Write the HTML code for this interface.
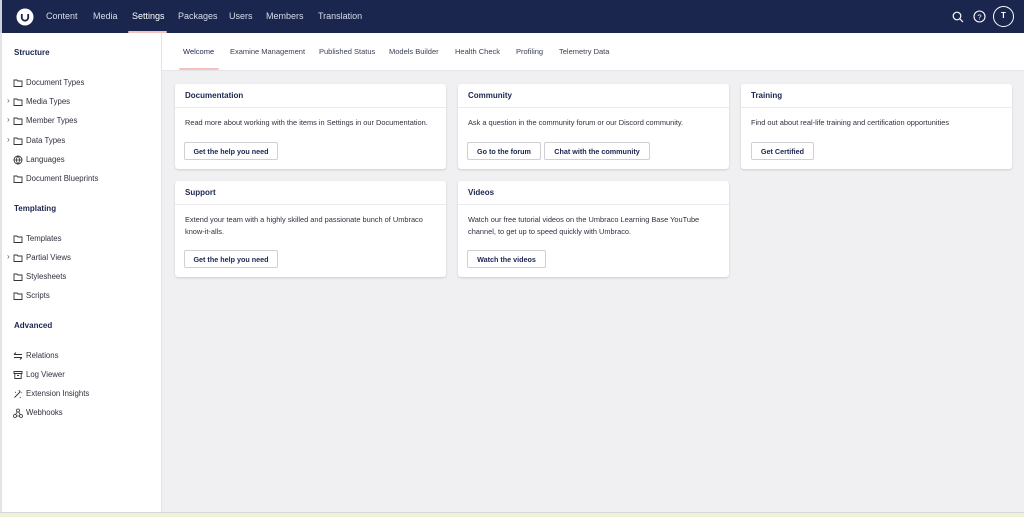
<!DOCTYPE html>
<html><head><meta charset="utf-8"><style>
*{margin:0;padding:0;box-sizing:border-box}
body{width:1024px;height:517px;overflow:hidden;background:#eef3d8;font-family:"Liberation Sans",sans-serif;color:#1b264f;position:relative}
.abs{position:absolute;white-space:nowrap}
#hdr{position:absolute;left:0;top:0;width:1024px;height:33px;background:#1b264f;border-left:2px solid #cfd2dc}
.nav{position:absolute;top:11px;font-size:9px;color:#d8dcea}
#side{position:absolute;left:0;top:33px;width:162px;height:480px;background:#fff;border-right:1px solid #e4e4e8;border-left:2px solid #e4e4e8}
#sin{position:absolute;left:-2px;top:-33px;width:160px;height:0}
#main{position:absolute;left:162px;top:33px;width:862px;height:480px;background:#f0f0f2}
#tabs{position:absolute;left:162px;top:33px;width:862px;height:38px;background:#fff;border-bottom:1px solid #e6e6ea}
.tab{position:absolute;top:14px;font-size:7.5px;color:#3a3f55}
.h{position:absolute;font-size:8px;font-weight:bold;color:#1b264f;left:14px}
.it{position:absolute;font-size:7.8px;color:#303040;left:26px}
.ic{position:absolute;left:13px;width:10px;height:10px}
.chev{position:absolute;left:7px;font-size:8px;color:#555}
.card{position:absolute;background:#fff;border-radius:3px;box-shadow:0 1px 2px rgba(0,0,0,.15)}
.ch{height:24px;border-bottom:1px solid #ebebef;font-size:8px;font-weight:bold;padding:7px 10px}
.cb{font-size:7.4px;color:#303040;padding:9px 10px 0;line-height:12px}
.btn{position:absolute;height:18px;border:1px solid #cfd0d6;border-radius:2px;font-size:7.2px;font-weight:bold;padding:4px 0;text-align:center;color:#1b264f;background:#fff}
</style></head><body>
<div id="hdr">
<svg class="abs" style="left:14px;top:8px" width="18" height="18" viewBox="0 0 18 18"><circle cx="9" cy="9" r="8.5" fill="#fff"/><path d="M5.8 6v3.5a3.2 3.2 0 0 0 6.4 0V6" stroke="#1b264f" stroke-width="1.8" fill="none"/></svg>
<span class="nav" style="left:44px">Content</span>
<span class="nav" style="left:91px">Media</span>
<span class="nav" style="left:130px;color:#fff">Settings</span>
<span class="nav" style="left:176px">Packages</span>
<span class="nav" style="left:227px">Users</span>
<span class="nav" style="left:264px">Members</span>
<span class="nav" style="left:316px">Translation</span>
<div class="abs" style="left:126px;top:31px;width:39px;height:2px;background:#f5c1bc;border-radius:2px"></div>
<svg class="abs" style="left:950px;top:11px" width="12" height="12" viewBox="0 0 12 12"><circle cx="5" cy="5" r="3.8" stroke="#fff" stroke-width="1.2" fill="none"/><path d="M8 8l3 3" stroke="#fff" stroke-width="1.2"/></svg>
<svg class="abs" style="left:971px;top:10px" width="13" height="13" viewBox="0 0 13 13"><circle cx="6.5" cy="6.5" r="5.5" stroke="#fff" stroke-width="1.1" fill="none"/><text x="6.5" y="9.3" font-size="7.5" fill="#fff" text-anchor="middle" font-family="Liberation Sans">?</text></svg>
<div class="abs" style="left:991px;top:6px;width:21px;height:21px;border:1.3px solid #fff;border-radius:50%;color:#fff;font-size:8px;font-weight:bold;text-align:center;line-height:18px">T</div>
</div>
<div id="side"><div id="sin">
<div class="h" style="top:48px">Structure</div>
<svg class="ic" style="top:78px" viewBox="0 0 10 10"><path d="M1 2h3l1 1h4v5.5H1z" stroke="#333" stroke-width=".9" fill="none"/></svg><div class="it" style="top:78px">Document Types</div>
<span class="chev" style="top:96px">›</span><svg class="ic" style="top:97px" viewBox="0 0 10 10"><path d="M1 2h3l1 1h4v5.5H1z" stroke="#333" stroke-width=".9" fill="none"/></svg><div class="it" style="top:97px">Media Types</div>
<span class="chev" style="top:115px">›</span><svg class="ic" style="top:116px" viewBox="0 0 10 10"><path d="M1 2h3l1 1h4v5.5H1z" stroke="#333" stroke-width=".9" fill="none"/></svg><div class="it" style="top:116px">Member Types</div>
<span class="chev" style="top:135px">›</span><svg class="ic" style="top:136px" viewBox="0 0 10 10"><path d="M1 2h3l1 1h4v5.5H1z" stroke="#333" stroke-width=".9" fill="none"/></svg><div class="it" style="top:136px">Data Types</div>
<svg class="ic" style="top:155px" viewBox="0 0 10 10"><circle cx="5" cy="5" r="4" stroke="#333" stroke-width=".9" fill="none"/><path d="M1 5h8M5 1c-2 2.5-2 5.5 0 8M5 1c2 2.5 2 5.5 0 8" stroke="#333" stroke-width=".8" fill="none"/></svg><div class="it" style="top:155px">Languages</div>
<svg class="ic" style="top:174px" viewBox="0 0 10 10"><path d="M1 2h3l1 1h4v5.5H1z" stroke="#333" stroke-width=".9" fill="none"/></svg><div class="it" style="top:174px">Document Blueprints</div>
<div class="h" style="top:204px">Templating</div>
<svg class="ic" style="top:234px" viewBox="0 0 10 10"><path d="M1 2h3l1 1h4v5.5H1z" stroke="#333" stroke-width=".9" fill="none"/></svg><div class="it" style="top:234px">Templates</div>
<span class="chev" style="top:252px">›</span><svg class="ic" style="top:253px" viewBox="0 0 10 10"><path d="M1 2h3l1 1h4v5.5H1z" stroke="#333" stroke-width=".9" fill="none"/></svg><div class="it" style="top:253px">Partial Views</div>
<svg class="ic" style="top:272px" viewBox="0 0 10 10"><path d="M1 2h3l1 1h4v5.5H1z" stroke="#333" stroke-width=".9" fill="none"/></svg><div class="it" style="top:272px">Stylesheets</div>
<svg class="ic" style="top:291px" viewBox="0 0 10 10"><path d="M1 2h3l1 1h4v5.5H1z" stroke="#333" stroke-width=".9" fill="none"/></svg><div class="it" style="top:291px">Scripts</div>
<div class="h" style="top:321px">Advanced</div>
<svg class="ic" style="top:351px" viewBox="0 0 10 10"><path d="M1 3.5h8M1 3.5l2-2M9 6.5H1M9 6.5l-2 2" stroke="#333" stroke-width=".9" fill="none"/></svg><div class="it" style="top:351px">Relations</div>
<svg class="ic" style="top:370px" viewBox="0 0 10 10"><path d="M1 1.5h8v2H1zM1.8 3.5v5h6.4v-5M4 5.5h2" stroke="#333" stroke-width=".9" fill="none"/></svg><div class="it" style="top:370px">Log Viewer</div>
<svg class="ic" style="top:389px" viewBox="0 0 10 10"><path d="M1.5 8.5l6-6M6 1l.5 1.5M8.5 3.5L9 4M2 3l1 .5M7 8l.5 1" stroke="#333" stroke-width=".9" fill="none"/></svg><div class="it" style="top:389px">Extension Insights</div>
<svg class="ic" style="top:408px" viewBox="0 0 10 10"><circle cx="5" cy="2.5" r="1.5" stroke="#333" stroke-width=".8" fill="none"/><circle cx="2" cy="8" r="1.5" stroke="#333" stroke-width=".8" fill="none"/><circle cx="8" cy="8" r="1.5" stroke="#333" stroke-width=".8" fill="none"/><path d="M4.3 4L2.5 6.5M3.5 8h3M5.7 4l1.5 2.5" stroke="#333" stroke-width=".8"/></svg><div class="it" style="top:408px">Webhooks</div>
</div></div>
<div id="main"></div>
<div id="tabs">
<span class="tab" style="left:21px;color:#1b264f">Welcome</span>
<span class="tab" style="left:68px">Examine Management</span>
<span class="tab" style="left:157px">Published Status</span>
<span class="tab" style="left:227px">Models Builder</span>
<span class="tab" style="left:293px">Health Check</span>
<span class="tab" style="left:354px">Profiling</span>
<span class="tab" style="left:397px">Telemetry Data</span>
<div class="abs" style="left:17px;top:35px;width:40px;height:2px;background:#f5c1bc;border-radius:2px"></div>
</div>
<div class="card" style="left:175px;top:84px;width:271px;height:85px"><div class="ch">Documentation</div><div class="cb">Read more about working with the items in Settings in our Documentation.</div><div class="btn" style="left:9px;top:58px;width:94px">Get the help you need</div></div>
<div class="card" style="left:458px;top:84px;width:271px;height:85px"><div class="ch">Community</div><div class="cb">Ask a question in the community forum or our Discord community.</div><div class="btn" style="left:9px;top:58px;width:74px">Go to the forum</div><div class="btn" style="left:86px;top:58px;width:106px">Chat with the community</div></div>
<div class="card" style="left:741px;top:84px;width:271px;height:85px"><div class="ch">Training</div><div class="cb">Find out about real-life training and certification opportunities</div><div class="btn" style="left:10px;top:58px;width:63px">Get Certified</div></div>
<div class="card" style="left:175px;top:181px;width:271px;height:96px"><div class="ch">Support</div><div class="cb">Extend your team with a highly skilled and passionate bunch of Umbraco know-it-alls.</div><div class="btn" style="left:9px;top:69px;width:94px">Get the help you need</div></div>
<div class="card" style="left:458px;top:181px;width:271px;height:96px"><div class="ch">Videos</div><div class="cb">Watch our free tutorial videos on the Umbraco Learning Base YouTube channel, to get up to speed quickly with Umbraco.</div><div class="btn" style="left:9px;top:69px;width:79px">Watch the videos</div></div>
<div class="abs" style="left:0;top:512px;width:1024px;height:1px;background:#d8d8dc"></div>
</body></html>
